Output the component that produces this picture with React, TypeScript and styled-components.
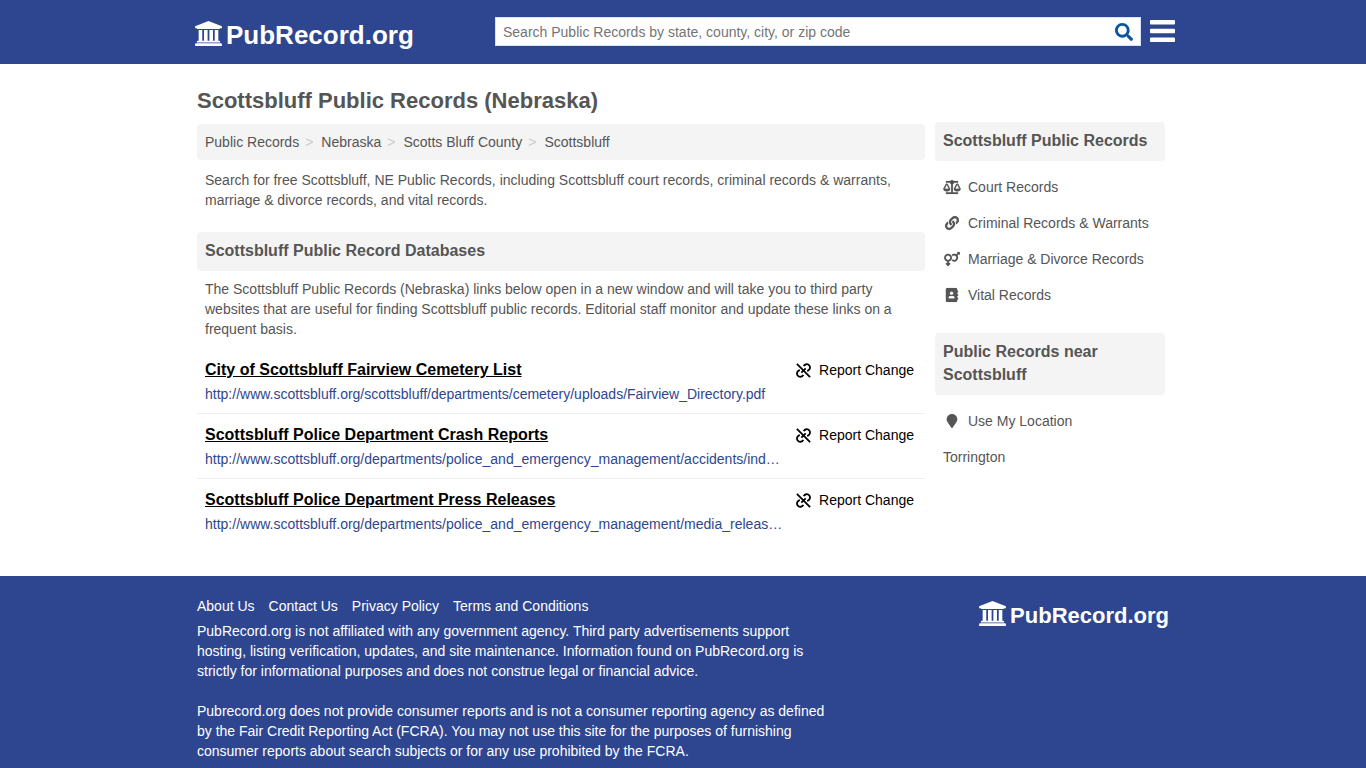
import React from 'react';
import styled, { createGlobalStyle } from 'styled-components';
import {
  FaSearch,
  FaBalanceScale,
  FaLink,
  FaVenusMars,
  FaAddressBook,
  FaMapMarker,
} from 'react-icons/fa';

const GlobalStyle = createGlobalStyle`
  *, *::before, *::after { box-sizing: border-box; }
  body {
    margin: 0;
    background: #fff;
    color: #555;
    font: 14px/20px "Liberation Sans", Arial, sans-serif;
  }
  a { color: inherit; text-decoration: none; }
  h1, h2, h3, p, ul, ol { margin: 0; padding: 0; }
  ul, ol { list-style: none; }
`;

const Container = styled.div`
  width: 100%;
  max-width: 972px;
  margin: 0 auto;
`;

const TopBar = styled.header`
  background: #2e468f;
`;

const TopBarInner = styled(Container)`
  display: flex;
  justify-content: space-between;
  align-items: flex-start;
  height: 64px;
  padding-top: 17px;
`;

const Brand = styled.a`
  display: flex;
  align-items: flex-start;
  gap: 4px;
  margin-left: -2px;
  color: #fff;
  font-size: 26px;
  font-weight: bold;
  line-height: 36px;

  svg {
    width: 27px;
    height: 25px;
    margin-top: 4px;
  }
`;

const FooterBrand = styled(Brand)`
  margin-top: 1px;
  font-size: 22px;
  line-height: 38px;
`;

const SearchArea = styled.div`
  display: flex;
  align-items: flex-start;
  flex: 0 1 680px;
  gap: 9px;
  margin-right: -6px;
`;

const SearchForm = styled.form`
  display: flex;
  flex: 1;
  height: 29px;
  background: #fff;
  border: 1px solid #d5e3fa;
`;

const SearchInput = styled.input`
  flex: 1;
  min-width: 0;
  padding: 0 7px;
  border: 0;
  outline: 0;
  background: transparent;
  font: inherit;
  color: #555;

  &::placeholder { color: #757575; opacity: 1; }
`;

const IconButton = styled.button`
  display: flex;
  align-items: center;
  justify-content: center;
  padding: 0;
  border: 0;
  background: transparent;
  cursor: pointer;
`;

const SearchButton = styled(IconButton)`
  width: 33px;
  color: #0b559f;
  font-size: 18px;
`;

const MenuButton = styled(IconButton)`
  height: 27px;
  color: #fff;
`;

const Page = styled(Container)`
  display: flex;
  align-items: flex-start;
  gap: 10px;
  padding-bottom: 33px;
`;

const Main = styled.main`
  flex: 1;
  min-width: 0;
  max-width: 728px;
`;

const Aside = styled.aside`
  flex: 0 0 230px;
  padding-top: 58px;
`;

const PageTitle = styled.h1`
  padding: 25px 0 11px;
  font-size: 22px;
  line-height: 24px;
`;

const Breadcrumb = styled.ol`
  display: flex;
  padding: 8px;
  border-radius: 4px;
  background: #f4f4f4;

  li + li::before {
    content: '>';
    padding: 0 8px 0 6px;
    color: #ccc;
  }
`;

const Text = styled.p`
  padding: 0 8px;
`;

const Intro = styled(Text)`
  padding-top: 10px;
  padding-bottom: 22px;
`;

const SectionTitle = styled.h2`
  padding: 7px 8px 9px;
  border-radius: 4px;
  background: #f4f4f4;
  font-size: 16px;
  line-height: 23px;
`;

const SectionText = styled(Text)`
  padding-top: 8px;
  padding-bottom: 10px;
`;

const Entry = styled.li`
  display: flex;
  justify-content: space-between;
  align-items: flex-start;
  padding: 10px 11px 9px 8px;

  & + & { border-top: 1px solid #eee; }
`;

const EntryBody = styled.div`
  width: 580px;
  min-width: 0;
`;

const EntryTitle = styled.h3`
  color: #000;
  font-size: 16px;
  line-height: 22px;

  a { text-decoration: underline; }
`;

const EntryUrl = styled.a`
  display: block;
  margin-top: 3px;
  overflow: hidden;
  color: #2e468f;
  text-overflow: ellipsis;
  white-space: nowrap;
`;

const ReportLink = styled.a`
  display: flex;
  align-items: center;
  gap: 8px;
  padding-top: 1px;
  color: #000;
  white-space: nowrap;
`;

const SideList = styled.ul`
  padding: 8px 0 20px;
`;

const SideLink = styled.a`
  display: flex;
  align-items: center;
  gap: 7px;
  padding: 8px;

  svg {
    width: 18px;
    height: 14px;
    stroke: currentColor;
    stroke-width: 5px;
    overflow: visible;
  }
`;

const Footer = styled.footer`
  background: #2e468f;
  color: #fff;
`;

const FooterInner = styled(Container)`
  display: flex;
  justify-content: space-between;
  align-items: flex-start;
  padding: 20px 0 24px;
`;

const FooterText = styled.div`
  max-width: 640px;

  p + p { margin-top: 20px; }
`;

const FooterNav = styled.nav`
  display: flex;
  gap: 14px;
  margin-bottom: 5px;
`;

const BankIcon = () => (
  <svg viewBox="0 0 1920 1792" fill="currentColor" aria-hidden="true">
    <path d="M960 0l960 384v128h-128q0 26-20.5 45t-48.5 19h-1526q-28 0-48.5-19t-20.5-45h-128v-128zM256 640h256v768h128v-768h256v768h128v-768h256v768h128v-768h256v768h59q28 0 48.5 19t20.5 45v64h-1664v-64q0-26 20.5-45t48.5-19h59v-768zM1851 1600q28 0 48.5 19t20.5 45v128h-1920v-128q0-26 20.5-45t48.5-19h1782z" />
  </svg>
);

const MenuIcon = () => (
  <svg width="25" height="22" viewBox="0 0 25 22" fill="currentColor" aria-hidden="true">
    <rect width="25" height="4.6" rx="0.8" />
    <rect y="8.7" width="25" height="4.6" rx="0.8" />
    <rect y="17.4" width="25" height="4.6" rx="0.8" />
  </svg>
);

const BrokenLinkIcon = () => (
  <svg
    width="15"
    height="15"
    viewBox="-0.5 -0.5 15 15"
    fill="none"
    stroke="currentColor"
    strokeWidth="1.8"
    aria-hidden="true"
  >
    <path d="M0.4 0.4L13.6 13.6" />
    <path d="M7.2 2.6A3.3 3.3 0 1 1 10.6 7.3" />
    <path d="M6.8 11.4A3.3 3.3 0 1 1 3.4 6.7" />
    <path d="M4.8 9.2L9.2 4.8" />
  </svg>
);

const crumbs = ['Public Records', 'Nebraska', 'Scotts Bluff County', 'Scottsbluff'];

const entries = [
  {
    title: 'City of Scottsbluff Fairview Cemetery List',
    url: 'http://www.scottsbluff.org/scottsbluff/departments/cemetery/uploads/Fairview_Directory.pdf',
  },
  {
    title: 'Scottsbluff Police Department Crash Reports',
    url: 'http://www.scottsbluff.org/departments/police_and_emergency_management/accidents/index.php',
  },
  {
    title: 'Scottsbluff Police Department Press Releases',
    url: 'http://www.scottsbluff.org/departments/police_and_emergency_management/media_releases/index.php',
  },
];

const categories = [
  { label: 'Court Records', Icon: FaBalanceScale },
  { label: 'Criminal Records & Warrants', Icon: FaLink },
  { label: 'Marriage & Divorce Records', Icon: FaVenusMars },
  { label: 'Vital Records', Icon: FaAddressBook },
];

const footerLinks = ['About Us', 'Contact Us', 'Privacy Policy', 'Terms and Conditions'];

export default function App() {
  return (
    <>
      <GlobalStyle />
      <TopBar>
        <TopBarInner>
          <Brand href="#">
            <BankIcon />
            PubRecord.org
          </Brand>
          <SearchArea>
            <SearchForm role="search">
              <SearchInput
                type="text"
                aria-label="Search Public Records"
                placeholder="Search Public Records by state, county, city, or zip code"
              />
              <SearchButton type="submit" aria-label="Search">
                <FaSearch />
              </SearchButton>
            </SearchForm>
            <MenuButton type="button" aria-label="Menu">
              <MenuIcon />
            </MenuButton>
          </SearchArea>
        </TopBarInner>
      </TopBar>

      <Page>
        <Main>
          <PageTitle>Scottsbluff Public Records (Nebraska)</PageTitle>
          <Breadcrumb>
            {crumbs.map((crumb) => (
              <li key={crumb}>
                <a href="#">{crumb}</a>
              </li>
            ))}
          </Breadcrumb>
          <Intro>
            Search for free Scottsbluff, NE Public Records, including Scottsbluff court records,
            criminal records &amp; warrants, marriage &amp; divorce records, and vital records.
          </Intro>
          <SectionTitle>Scottsbluff Public Record Databases</SectionTitle>
          <SectionText>
            The Scottsbluff Public Records (Nebraska) links below open in a new window and will take
            you to third party websites that are useful for finding Scottsbluff public records.
            Editorial staff monitor and update these links on a frequent basis.
          </SectionText>
          <ul>
            {entries.map(({ title, url }) => (
              <Entry key={title}>
                <EntryBody>
                  <EntryTitle>
                    <a href="#">{title}</a>
                  </EntryTitle>
                  <EntryUrl href="#">{url}</EntryUrl>
                </EntryBody>
                <ReportLink href="#">
                  <BrokenLinkIcon />
                  Report Change
                </ReportLink>
              </Entry>
            ))}
          </ul>
        </Main>

        <Aside>
          <SectionTitle>Scottsbluff Public Records</SectionTitle>
          <SideList>
            {categories.map(({ label, Icon }) => (
              <li key={label}>
                <SideLink href="#">
                  <Icon />
                  {label}
                </SideLink>
              </li>
            ))}
          </SideList>
          <SectionTitle>Public Records near Scottsbluff</SectionTitle>
          <SideList>
            <li>
              <SideLink href="#">
                <FaMapMarker />
                Use My Location
              </SideLink>
            </li>
            <li>
              <SideLink href="#">Torrington</SideLink>
            </li>
          </SideList>
        </Aside>
      </Page>

      <Footer>
        <FooterInner>
          <FooterText>
            <FooterNav>
              {footerLinks.map((label) => (
                <a key={label} href="#">
                  {label}
                </a>
              ))}
            </FooterNav>
            <p>
              PubRecord.org is not affiliated with any government agency. Third party advertisements
              support hosting, listing verification, updates, and site maintenance. Information found
              on PubRecord.org is strictly for informational purposes and does not construe legal or
              financial advice.
            </p>
            <p>
              Pubrecord.org does not provide consumer reports and is not a consumer reporting agency
              as defined by the Fair Credit Reporting Act (FCRA). You may not use this site for the
              purposes of furnishing consumer reports about search subjects or for any use prohibited
              by the FCRA.
            </p>
          </FooterText>
          <FooterBrand href="#">
            <BankIcon />
            PubRecord.org
          </FooterBrand>
        </FooterInner>
      </Footer>
    </>
  );
}
